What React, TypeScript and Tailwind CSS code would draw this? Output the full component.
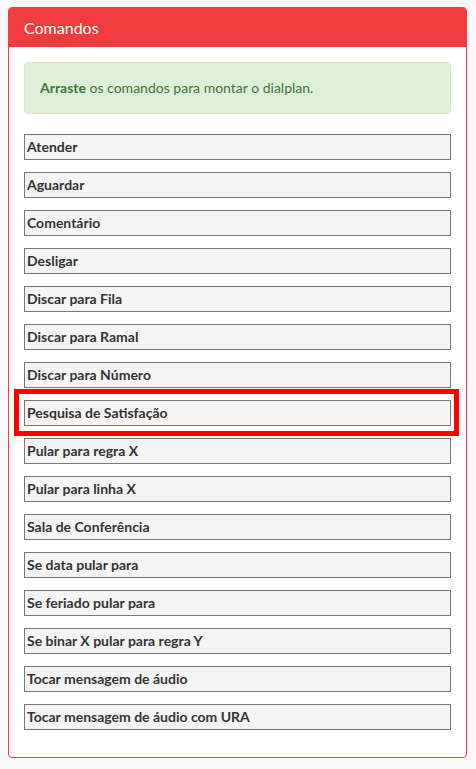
import React from 'react';

const commands = [
  'Atender',
  'Aguardar',
  'Comentário',
  'Desligar',
  'Discar para Fila',
  'Discar para Ramal',
  'Discar para Número',
  'Pesquisa de Satisfação',
  'Pular para regra X',
  'Pular para linha X',
  'Sala de Conferência',
  'Se data pular para',
  'Se feriado pular para',
  'Se binar X pular para regra Y',
  'Tocar mensagem de áudio',
  'Tocar mensagem de áudio com URA',
];

export default function App() {
  return (
    <div
      className="min-h-[769px] w-[476px] bg-[#f8f8f8] pt-[7px] pl-[8px]"
      style={{ fontFamily: 'Lato, "Open Sans", sans-serif' }}
    >
      <div className="w-[459px] rounded-[4px] border border-[#f03c3c] bg-white">
        <div className="flex h-[39px] items-center rounded-t-[3px] bg-[#f03c3c] px-[15px] text-[16px] text-white">
          Comandos
        </div>
        <div className="p-[15px]">
          <div className="mb-[20px] rounded-[4px] border border-[#d6e9c6] bg-[#dff0d8] px-[15px] py-[15px] text-[14px] leading-[20px] text-[#3c763d]">
            <b>Arraste</b> os comandos para montar o dialplan.
          </div>
          {commands.map((c) => (
            <div key={c} className="relative mb-[12px]">
              <div className="h-[26px] border border-[#777] bg-[#f5f5f5] pl-[2px] text-[14px] font-bold leading-[24px] text-[#333]">
                {c}
              </div>
              {c === 'Pesquisa de Satisfação' && (
                <div className="pointer-events-none absolute top-[-11px] bottom-[-10px] left-[-10px] right-[-8px] border-[5px] border-[#ff0000]" />
              )}
            </div>
          ))}
        </div>
      </div>
    </div>
  );
}
